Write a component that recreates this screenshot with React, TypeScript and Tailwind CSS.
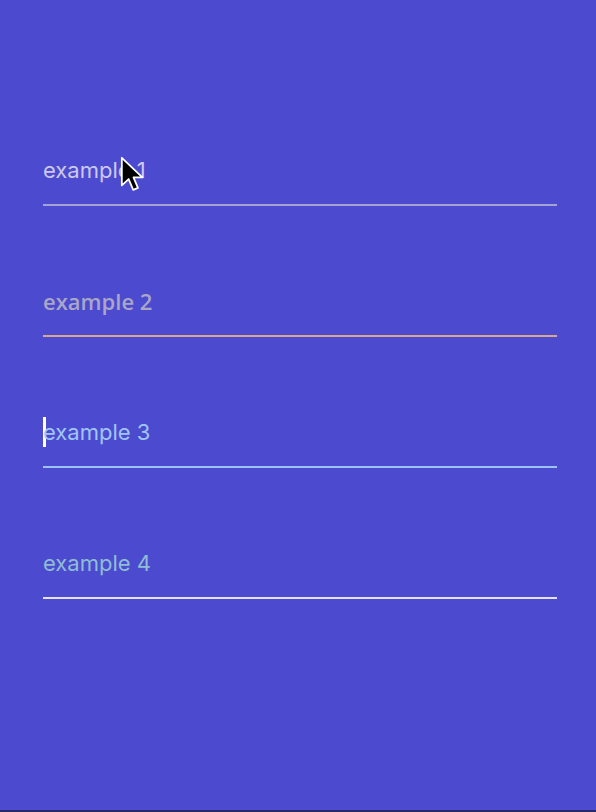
import React from 'react';

function Cursor() {
  return (
    <svg
      className="absolute left-[120px] top-[156px]"
      width="26"
      height="40"
      viewBox="0 0 22 34"
    >
      <path
        d="M1.5 1.5 L1.5 25 L7.3 19.6 L11.2 28.8 L15.2 27.1 L11.4 18.2 L19 18.2 Z"
        fill="#000"
        stroke="#fff"
        strokeWidth="1.5"
        strokeLinejoin="round"
      />
    </svg>
  );
}

export default function App() {
  return (
    <div className="relative flex h-[812px] w-full flex-col gap-[81px] border-b-2 border-[#27276e] bg-[#4c4bcf] px-[43px] pt-[156px]">
      {/* Field 1 */}
      <div className="w-[514px] border-b-2 border-[#a5a3d6] pb-[20px]">
        <div className="text-[22px] leading-[28px] text-[#cdc8ec]" style={{ fontFamily: 'Inter, sans-serif' }}>
          example 1
        </div>
      </div>

      {/* Field 2 */}
      <div className="w-[514px] border-b-2 border-[#d7a98a] pb-[20px]">
        <div className="text-[22px] font-semibold leading-[28px] text-[#a9a6c6]" style={{ fontFamily: '"Open Sans", sans-serif' }}>
          example 2
        </div>
      </div>

      {/* Field 3 */}
      <div className="w-[514px] border-b-2 border-[#9cc2f2] pb-[20px]">
        <div className="flex h-[28px] items-center text-[22px] leading-[28px] text-[#a0c6f6]" style={{ fontFamily: 'Inter, sans-serif' }}>
          <span className="my-[-2px] mr-[-3px] inline-block h-[30px] w-[3px] shrink-0 bg-white" />
          example 3
        </div>
      </div>

      {/* Field 4 */}
      <div className="w-[514px] border-b-2 border-[#e4e2f7] pb-[20px]">
        <div className="text-[22px] leading-[28px] text-[#8fbdd3]" style={{ fontFamily: 'Inter, sans-serif' }}>
          example 4
        </div>
      </div>

      <Cursor />
    </div>
  );
}
